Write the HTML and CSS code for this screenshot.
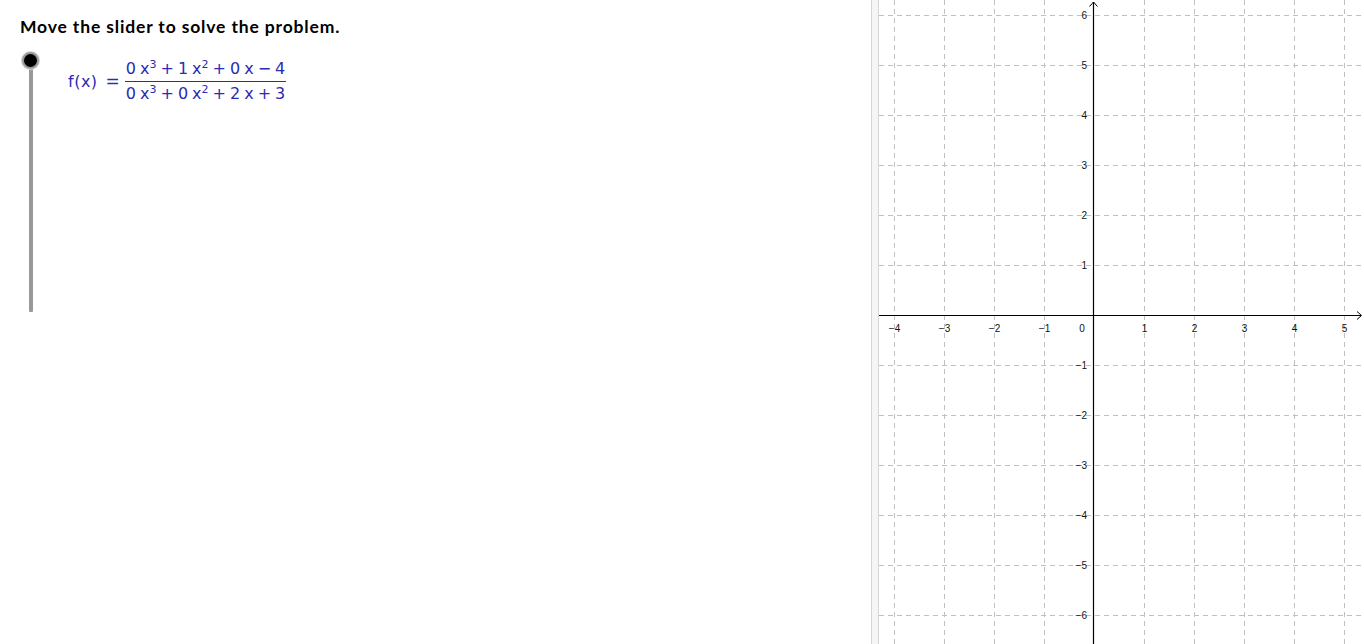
FILE: index.html
```html
<!DOCTYPE html>
<html>
<head>
<meta charset="utf-8">
<link rel="stylesheet" href="styles.css">
</head>
<body>
<div class="app">
  <div class="algebra">
    <h1 class="title">Move the slider to solve the problem.</h1>
    <div class="row">
      <div class="slider">
        <div class="track"></div>
        <div class="knob"></div>
      </div>
      <div class="formula">
        <span class="fx">f(x)</span>
        <span class="eq">=</span>
        <span class="frac">
          <span class="num">0<span class="sp"></span>x<sup>3</sup><span class="op">+</span>1<span class="sp"></span>x<sup>2</sup><span class="op">+</span>0<span class="sp"></span>x<span class="op">−</span>4</span>
          <span class="den">0<span class="sp"></span>x<sup>3</sup><span class="op">+</span>0<span class="sp"></span>x<sup>2</sup><span class="op">+</span>2<span class="sp"></span>x<span class="op">+</span>3</span>
        </span>
      </div>
    </div>
  </div>
  <div class="divider"></div>
  <div class="graphics">
    <svg class="plot" viewBox="879 0 485 644" width="485" height="644">
      <g class="grid">
        <line x1="894.5" y1="0" x2="894.5" y2="644"/>
        <line x1="944.5" y1="0" x2="944.5" y2="644"/>
        <line x1="994.5" y1="0" x2="994.5" y2="644"/>
        <line x1="1044.5" y1="0" x2="1044.5" y2="644"/>
        <line x1="1144.5" y1="0" x2="1144.5" y2="644"/>
        <line x1="1194.5" y1="0" x2="1194.5" y2="644"/>
        <line x1="1244.5" y1="0" x2="1244.5" y2="644"/>
        <line x1="1294.5" y1="0" x2="1294.5" y2="644"/>
        <line x1="1344.5" y1="0" x2="1344.5" y2="644"/>
        <line x1="879" y1="15.5" x2="1364" y2="15.5"/>
        <line x1="879" y1="65.5" x2="1364" y2="65.5"/>
        <line x1="879" y1="115.5" x2="1364" y2="115.5"/>
        <line x1="879" y1="165.5" x2="1364" y2="165.5"/>
        <line x1="879" y1="215.5" x2="1364" y2="215.5"/>
        <line x1="879" y1="265.5" x2="1364" y2="265.5"/>
        <line x1="879" y1="365.5" x2="1364" y2="365.5"/>
        <line x1="879" y1="415.5" x2="1364" y2="415.5"/>
        <line x1="879" y1="465.5" x2="1364" y2="465.5"/>
        <line x1="879" y1="515.5" x2="1364" y2="515.5"/>
        <line x1="879" y1="565.5" x2="1364" y2="565.5"/>
        <line x1="879" y1="615.5" x2="1364" y2="615.5"/>
      </g>
      <g class="axes">
        <line x1="879" y1="315.5" x2="1361" y2="315.5"/>
        <line x1="1093.5" y1="2" x2="1093.5" y2="644"/>
        <polyline points="1357,311.5 1361.5,315.5 1357,319.5"/>
        <polyline points="1089.5,6.5 1093.5,2 1097.5,6.5"/>
      </g>
      <g class="xlabels">
        <text x="894.5" y="331.5">−4</text>
        <text x="944.5" y="331.5">−3</text>
        <text x="994.5" y="331.5">−2</text>
        <text x="1044.5" y="331.5">−1</text>
        <text x="1082" y="331.5">0</text>
        <text x="1144.5" y="331.5">1</text>
        <text x="1194.5" y="331.5">2</text>
        <text x="1244.5" y="331.5">3</text>
        <text x="1294.5" y="331.5">4</text>
        <text x="1344.5" y="331.5">5</text>
      </g>
      <g class="ylabels">
        <text x="1087" y="19">6</text>
        <text x="1087" y="69">5</text>
        <text x="1087" y="119">4</text>
        <text x="1087" y="169">3</text>
        <text x="1087" y="219">2</text>
        <text x="1087" y="269">1</text>
        <text x="1087" y="369">−1</text>
        <text x="1087" y="419">−2</text>
        <text x="1087" y="469">−3</text>
        <text x="1087" y="519">−4</text>
        <text x="1087" y="569">−5</text>
        <text x="1087" y="619">−6</text>
      </g>
    </svg>
  </div>
</div>
</body>
</html>
```

FILE: styles.css
```css
html, body {
  margin: 0;
  padding: 0;
  background: #ffffff;
}

.app {
  display: flex;
  width: 1364px;
  height: 644px;
  overflow: hidden;
}

.algebra {
  width: 871px;
  flex: none;
  padding: 16px 0 0 20px;
  box-sizing: border-box;
}

.title {
  margin: 0;
  font-family: "Lato", "DejaVu Sans", sans-serif;
  font-weight: bold;
  font-size: 17.5px;
  letter-spacing: 0.85px;
  line-height: 22px;
  color: #000;
}

.row {
  display: flex;
  margin-top: 14px;
}

.slider {
  position: relative;
  width: 22px;
  height: 261px;
  flex: none;
}

.track {
  position: absolute;
  left: 9px;
  top: 9px;
  width: 4px;
  height: 251px;
  background: #999999;
  border-radius: 1px;
}

.knob {
  position: absolute;
  left: 1.5px;
  top: 0;
  width: 13px;
  height: 13px;
  border-radius: 50%;
  background: #000;
  border: 2.5px solid #9a9a9a;
  box-shadow: 0 0 0 1px #d4d4d4;
}

.formula {
  display: flex;
  align-items: center;
  margin-left: 26px;
  margin-top: 5px;
  height: 48px;
  font-family: "DejaVu Sans", sans-serif;
  font-size: 16px;
  color: #2b2bb3;
}

.fx {
  letter-spacing: 0.5px;
}

.eq {
  margin: 0 5px 0 8px;
  font-size: 17px;
}

.frac {
  display: inline-flex;
  flex-direction: column;
  align-items: center;
}

.num, .den {
  display: block;
  line-height: 21px;
  white-space: nowrap;
  padding: 0 1px;
}

.num {
  border-bottom: 1px solid #2b2bb3;
  padding-bottom: 2px;
}

.den {
  padding-top: 1px;
}

.sp {
  display: inline-block;
  width: 4px;
}

sup {
  font-size: 11px;
  line-height: 0;
  vertical-align: 6px;
}

.op {
  display: inline-block;
  margin: 0 4px;
}

.divider {
  width: 8px;
  flex: none;
  box-sizing: border-box;
  background: #f5f5f5;
  border-left: 1px solid #d6d6d6;
  border-right: 1px solid #d6d6d6;
}

.graphics {
  flex: 1;
  position: relative;
  overflow: hidden;
}

.plot {
  display: block;
}

.grid line {
  stroke: #c0c0c0;
  stroke-width: 1;
  stroke-dasharray: 5 4;
}

.axes line {
  stroke: #000;
  stroke-width: 1.2;
}

.axes polyline {
  fill: none;
  stroke: #000;
  stroke-width: 1;
}

.xlabels text, .ylabels text {
  font-family: "Liberation Sans", Arial, sans-serif;
  font-size: 10px;
  fill: #111;
}

.xlabels text {
  text-anchor: middle;
}

.ylabels text {
  text-anchor: end;
}
```
